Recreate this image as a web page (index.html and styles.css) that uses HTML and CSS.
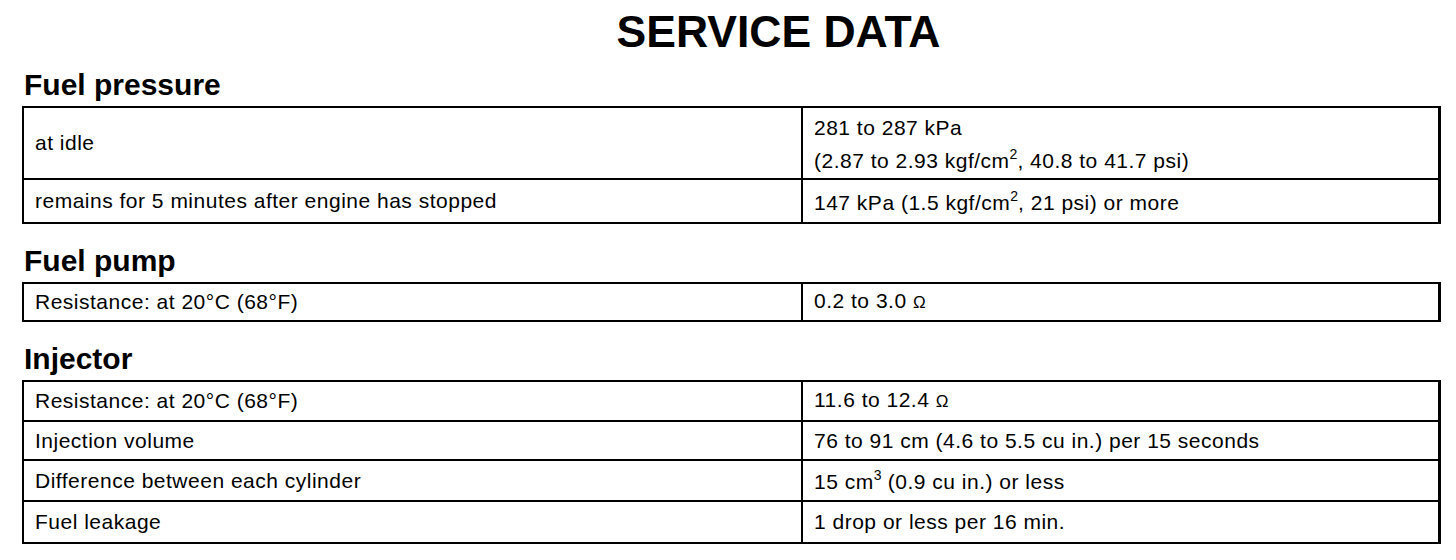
FILE: index.html
```html
<!DOCTYPE html>
<html>
<head>
<meta charset="utf-8">
<link rel="stylesheet" href="styles.css">
</head>
<body>
<div class="page">
  <h1 class="title">SERVICE DATA</h1>

  <h2 class="section">Fuel pressure</h2>
  <div class="spec">
    <div class="row r72">
      <div class="cell key"><span>at idle</span></div>
      <div class="cell val two"><span>281 to 287 kPa<br>(2.87 to 2.93 kgf/cm<sup>2</sup>, 40.8 to 41.7 psi)</span></div>
    </div>
    <div class="row r42">
      <div class="cell key"><span>remains for 5 minutes after engine has stopped</span></div>
      <div class="cell val low"><span>147 kPa (1.5 kgf/cm<sup>2</sup>, 21 psi) or more</span></div>
    </div>
  </div>

  <h2 class="section gap">Fuel pump</h2>
  <div class="spec">
    <div class="row r36">
      <div class="cell key"><span>Resistance: at 20°C (68°F)</span></div>
      <div class="cell val"><span>0.2 to 3.0 <span class="ohm">Ω</span></span></div>
    </div>
  </div>

  <h2 class="section gap">Injector</h2>
  <div class="spec">
    <div class="row r40">
      <div class="cell key"><span>Resistance: at 20°C (68°F)</span></div>
      <div class="cell val"><span>11.6 to 12.4 <span class="ohm">Ω</span></span></div>
    </div>
    <div class="row r39">
      <div class="cell key"><span>Injection volume</span></div>
      <div class="cell val"><span>76 to 91 cm (4.6 to 5.5 cu in.) per 15 seconds</span></div>
    </div>
    <div class="row r41">
      <div class="cell key"><span>Difference between each cylinder</span></div>
      <div class="cell val low"><span>15 cm<sup>3</sup> (0.9 cu in.) or less</span></div>
    </div>
    <div class="row r40">
      <div class="cell key"><span>Fuel leakage</span></div>
      <div class="cell val"><span>1 drop or less per 16 min.</span></div>
    </div>
  </div>
</div>
</body>
</html>
```

FILE: styles.css
```css
html, body {
  margin: 0;
  padding: 0;
  background: #fff;
  color: #000;
  font-family: "Liberation Sans", Arial, sans-serif;
}

.page {
  width: 1419px;
  margin-left: 22px;
}

.title {
  margin: 0;
  height: 64px;
  line-height: 64px;
  font-size: 44.5px;
  font-weight: bold;
  text-align: center;
  padding-left: 94px;
}

.section {
  margin: 0;
  height: 42px;
  line-height: 42px;
  font-size: 30px;
  font-weight: bold;
  padding-left: 2px;
}

.section.gap {
  margin-top: 16px;
}

.spec {
  border: 2px solid #000;
  border-right-width: 3px;
  box-sizing: border-box;
}

.row {
  display: grid;
  grid-template-columns: 779px 1fr;
}

.row.r72 { height: 72px; }
.row.r42 { height: 42px; }
.row.r36 { height: 36px; }
.row.r40 { height: 40px; }
.row.r39 { height: 39px; }
.row.r41 { height: 41px; }

.cell {
  box-sizing: border-box;
  border-bottom: 2px solid #000;
  padding-left: 11px;
  display: flex;
  align-items: center;
  font-size: 21px;
  letter-spacing: 0.5px;
  line-height: 24px;
  white-space: nowrap;
}

.row:last-child .cell {
  border-bottom: 0;
}

.cell.key {
  border-right: 2px solid #000;
}

.cell.val.low span {
  padding-top: 3px;
}

.cell.two {
  line-height: 33px;
}

.cell.two > span {
  padding-top: 2px;
}

sup {
  font-size: 14px;
  line-height: 0;
  vertical-align: 9px;
  letter-spacing: 0;
}

.ohm {
  font-size: 17px;
}
```
